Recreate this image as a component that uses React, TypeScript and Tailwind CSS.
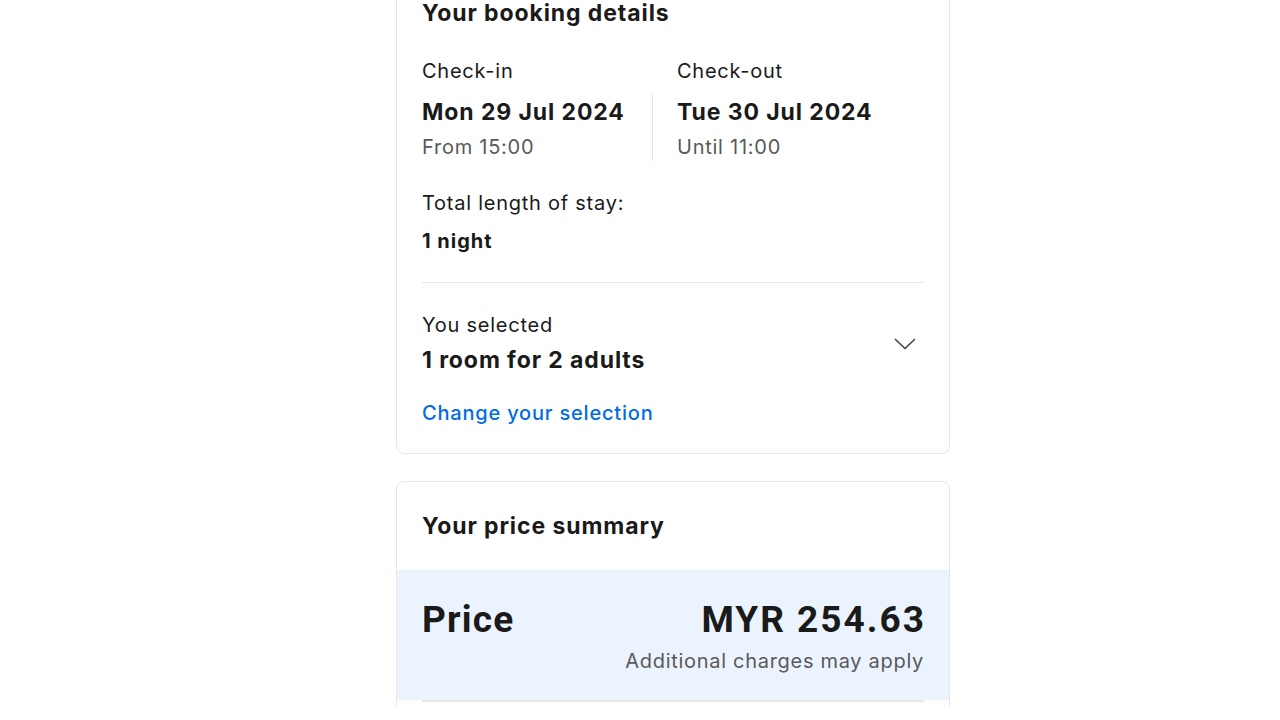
import React from "react";

function Chevron() {
  return (
    <svg width="24" height="24" viewBox="0 0 24 24" className="mr-[7px] shrink-0" fill="none">
      <path d="M2.5 7.5 L12 16.5 L21.5 7.5" stroke="#474747" strokeWidth="1.7" strokeLinecap="round" strokeLinejoin="round" />
    </svg>
  );
}

export default function App() {
  return (
    <div className="w-[1280px] h-[706px] overflow-hidden bg-white text-[#1a1a1a]" style={{ fontFamily: "Inter, 'Liberation Sans', sans-serif" }}>
      <div className="w-[554px] ml-[396px]">
        <div className="mt-[-26px] border border-[#e7e7e7] rounded-[8px] px-[25px] pt-[24px] pb-[26px]">
          <div className="text-[23px] leading-[28px] font-bold tracking-[0.9px]">Your booking details</div>
          <div className="mt-[30px] flex">
            <div className="w-[230px] shrink-0">
              <div className="text-[20px] leading-[28px] tracking-[0.75px]">Check-in</div>
              <div className="mt-[9px]">
                <div className="text-[23px] leading-[36px] font-bold tracking-[0.9px]">Mon 29 Jul 2024</div>
                <div className="mt-[3px] text-[20px] leading-[28px] tracking-[0.75px] text-[#595959]">From 15:00</div>
              </div>
            </div>
            <div className="flex-1">
              <div className="pl-[25px] text-[20px] leading-[28px] tracking-[0.75px]">Check-out</div>
              <div className="mt-[9px] border-l border-[#e7e7e7] pl-[24px]">
                <div className="text-[23px] leading-[36px] font-bold tracking-[0.9px]">Tue 30 Jul 2024</div>
                <div className="mt-[3px] text-[20px] leading-[28px] tracking-[0.75px] text-[#595959]">Until 11:00</div>
              </div>
            </div>
          </div>
          <div className="mt-[28px] text-[20px] leading-[28px] tracking-[0.75px]">Total length of stay:</div>
          <div className="mt-[10px] text-[20px] leading-[28px] font-bold tracking-[1px]">1 night</div>
          <div className="mt-[27px] h-px bg-[#e7e7e7]" />
          <div className="mt-[28px] flex items-center justify-between">
            <div>
              <div className="text-[20px] leading-[28px] tracking-[0.75px]">You selected</div>
              <div className="mt-[5px] text-[23px] leading-[32px] font-bold tracking-[0.9px]">1 room for 2 adults</div>
            </div>
            <Chevron />
          </div>
          <div className="mt-[23px] text-[20px] leading-[28px] font-medium tracking-[0.8px] text-[#006ce4]">Change your selection</div>
        </div>

        <div className="mt-[27px] border border-[#e7e7e7] rounded-[8px]">
          <div className="px-[25px] pt-[30px] pb-[30px] text-[23px] leading-[28px] font-bold tracking-[0.9px]">Your price summary</div>
          <div className="bg-[#ebf3ff] px-[25px] pt-[28px] pb-[25px]">
            <div className="flex justify-between items-center" style={{ fontFamily: "Roboto, 'Liberation Sans', sans-serif" }}>
              <div className="text-[37px] leading-[44px] font-bold tracking-[1.2px]">Price</div>
              <div className="text-[37px] leading-[44px] font-bold tracking-[2px] mr-[-2px]">MYR 254.63</div>
            </div>
            <div className="mt-[5px] text-right text-[20px] leading-[28px] tracking-[0.7px] text-[#595959]">Additional charges may apply</div>
          </div>
          <div className="mx-[25px] h-[2px] bg-[#e7e7e7]" />
          <div className="h-[40px]" />
        </div>
      </div>
    </div>
  );
}
